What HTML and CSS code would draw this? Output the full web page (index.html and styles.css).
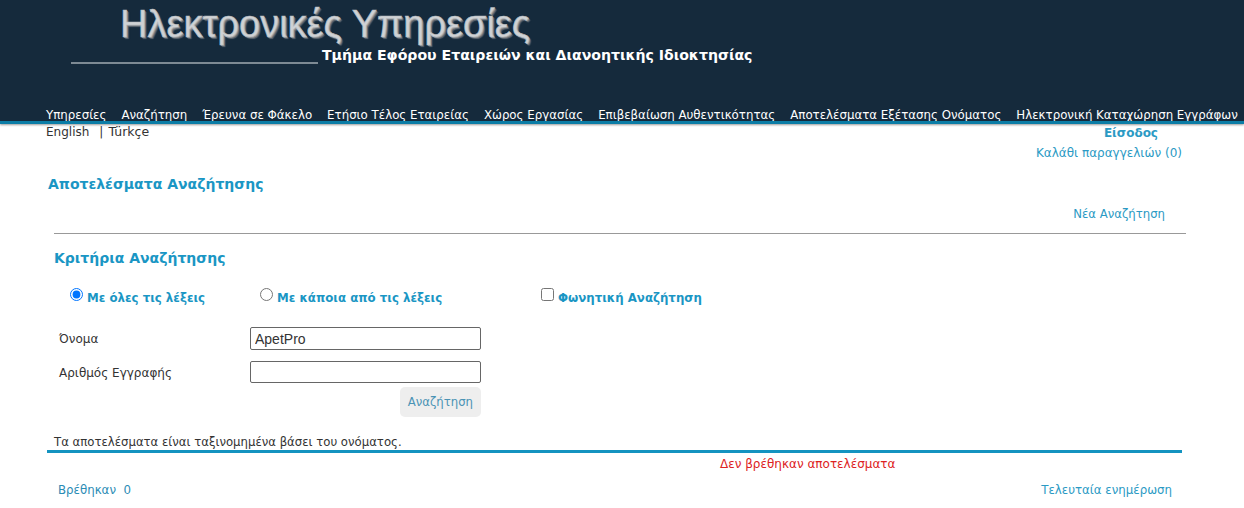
FILE: index.html
```html
<!DOCTYPE html>
<html lang="el">
<head>
    <meta charset="UTF-8">
    <meta name="viewport" content="width=device-width, initial-scale=1.0">
    <title>Ηλεκτρονικές Υπηρεσίες</title>
    <link rel="stylesheet" href="styles.css">
</head>
<body>
    <header class="banner">
        <div class="logo-title">Ηλεκτρονικές Υπηρεσίες</div>
        <div class="logo-sub">
            <span class="logo-line"></span>
            <span class="logo-dept">Τμήμα Εφόρου Εταιρειών και Διανοητικής Ιδιοκτησίας</span>
        </div>
        <nav class="menu">
            <a href="#">Υπηρεσίες</a>
            <a href="#">Αναζήτηση</a>
            <a href="#">Έρευνα σε Φάκελο</a>
            <a href="#">Ετήσιο Τέλος Εταιρείας</a>
            <a href="#">Χώρος Εργασίας</a>
            <a href="#">Επιβεβαίωση Αυθεντικότητας</a>
            <a href="#">Αποτελέσματα Εξέτασης Ονόματος</a>
            <a href="#">Ηλεκτρονική Καταχώρηση Εγγράφων</a>
        </nav>
    </header>

    <div class="top-row">
        <div class="lang">
            <span>English</span>
            <span class="lang-sep">|</span>
            <span class="lang-tr">Türkçe</span>
        </div>
        <div class="account">
            <a class="login" href="#">Είσοδος</a>
            <a class="cart" href="#">Καλάθι παραγγελιών (0)</a>
        </div>
    </div>

    <h1 class="page-title">Αποτελέσματα Αναζήτησης</h1>
    <div class="new-search"><a href="#">Νέα Αναζήτηση</a></div>

    <form class="criteria">
        <h2>Κριτήρια Αναζήτησης</h2>
        <div class="options">
            <label class="opt opt-all"><input type="radio" name="mode" checked>Με όλες τις λέξεις</label>
            <label class="opt opt-any"><input type="radio" name="mode">Με κάποια από τις λέξεις</label>
            <label class="opt"><input type="checkbox">Φωνητική Αναζήτηση</label>
        </div>
        <div class="field field-name">
            <label for="name">Όνομα</label>
            <input type="text" id="name" value="ApetPro">
        </div>
        <div class="field field-regno">
            <label for="regno">Αριθμός Εγγραφής</label>
            <input type="text" id="regno">
        </div>
        <div class="actions">
            <button type="button">Αναζήτηση</button>
        </div>
    </form>

    <div class="results">
        <p class="sort-note">Τα αποτελέσματα είναι ταξινομημένα βάσει του ονόματος.</p>
        <p class="no-results">Δεν βρέθηκαν αποτελέσματα</p>
        <div class="results-foot">
            <span>Βρέθηκαν &nbsp;0</span>
            <a href="#">Τελευταία ενημέρωση</a>
        </div>
    </div>
</body>
</html>
```

FILE: styles.css
```css
body {
    margin: 0;
    height: 508px;
    overflow: hidden;
    background: #fff;
    color: #333;
    font-family: "DejaVu Sans", Verdana, sans-serif;
    font-size: 12px;
}
a {
    color: #2b9ac4;
    text-decoration: none;
}
.banner {
    box-sizing: border-box;
    height: 124px;
    background: #152a3c;
    border-bottom: 3px solid #0c7da6;
    box-shadow: 0 1px 2px rgba(0, 0, 0, 0.4);
    overflow: hidden;
}
.logo-title {
    padding: 3px 0 0 120px;
    height: 43px;
    font-family: "Liberation Sans", Arial, sans-serif;
    font-size: 38px;
    line-height: 43px;
    white-space: nowrap;
    color: #cfd2d5;
    -webkit-text-stroke: 0.6px #b4b8bc;
    text-shadow: 1px 1px 0 #8a8f94, 2px 2px 1px #5c6670;
}
.logo-sub {
    display: flex;
    align-items: flex-end;
    padding-left: 71px;
    height: 18px;
}
.logo-line {
    width: 247px;
    height: 2px;
    margin-right: 4px;
    background: #7d8a94;
}
.logo-dept {
    color: #fff;
    font-size: 14.1px;
    font-weight: bold;
    line-height: 18px;
    white-space: nowrap;
}
.menu {
    display: flex;
    gap: 15px;
    padding: 43px 0 0 46px;
    white-space: nowrap;
}
.menu a {
    color: #fff;
    font-size: 11.8px;
    line-height: 16px;
}
.top-row {
    display: flex;
    justify-content: space-between;
    padding: 0 62px 0 46px;
    height: 50px;
}
.lang {
    display: flex;
    line-height: 16px;
}
.lang-sep {
    margin-left: 10px;
}
.lang-tr {
    margin-left: 5px;
    font-size: 12.5px;
}
.account {
    display: flex;
    flex-direction: column;
    align-items: flex-end;
    padding-top: 1px;
}
.login {
    margin-right: 24px;
    font-weight: bold;
    line-height: 16px;
}
.cart {
    margin-top: 4px;
    line-height: 16px;
}
.page-title {
    margin: 0 0 0 48px;
    color: #1a96c4;
    font-size: 14px;
    line-height: 20px;
    height: 20px;
}
.new-search {
    margin-top: 12px;
    padding-right: 79px;
    text-align: right;
    line-height: 16px;
}
.new-search a {
    font-size: 11.7px;
}
.criteria {
    margin: 11px 58px 0 54px;
    border-top: 1px solid #999;
}
.criteria h2 {
    margin: 0;
    padding-top: 15px;
    color: #1a96c4;
    font-size: 14px;
    line-height: 18px;
}
.options {
    display: flex;
    margin-top: 21px;
    padding-left: 16px;
    height: 20px;
}
.opt {
    color: #1a96c4;
    font-size: 11.8px;
    font-weight: bold;
    line-height: 20px;
    white-space: nowrap;
}
.opt input {
    margin: 0 4px 0 0;
    vertical-align: 1px;
}
.opt-all {
    width: 190px;
}
.opt-any {
    width: 281px;
}
.field {
    display: flex;
    align-items: center;
    padding-left: 5px;
}
.field-name {
    margin-top: 19px;
    height: 23px;
}
.field-regno {
    margin-top: 11px;
    height: 22px;
}
.field-regno label {
    padding-top: 2px;
}
.field label {
    width: 191px;
}
.field input {
    box-sizing: border-box;
    width: 231px;
    height: 100%;
    padding: 1px 4px;
    border: 1px solid #666;
    border-radius: 2px;
    font-family: "Liberation Sans", Arial, sans-serif;
    font-size: 14px;
    color: #333;
}
.actions {
    width: 427px;
    margin-top: 4px;
    display: flex;
    justify-content: flex-end;
}
.actions button {
    height: 30px;
    padding: 0 8px;
    border: 0;
    border-radius: 5px;
    background: #eee;
    color: #4a93b5;
    font-family: inherit;
    font-size: 11.7px;
}
.results {
    margin: 0 62px 0 47px;
}
.sort-note {
    margin: 17px 0 0;
    padding-left: 7px;
    border-bottom: 3px solid #1493c0;
    font-size: 11.7px;
    line-height: 16px;
    height: 16px;
}
.no-results {
    margin: 3px 0 0;
    padding-left: 673px;
    color: #d22;
    line-height: 16px;
}
.results-foot {
    display: flex;
    justify-content: space-between;
    margin-top: 10px;
    padding: 0 10px 0 11px;
    color: #2b8cb5;
    font-size: 11.8px;
    line-height: 16px;
}
```
